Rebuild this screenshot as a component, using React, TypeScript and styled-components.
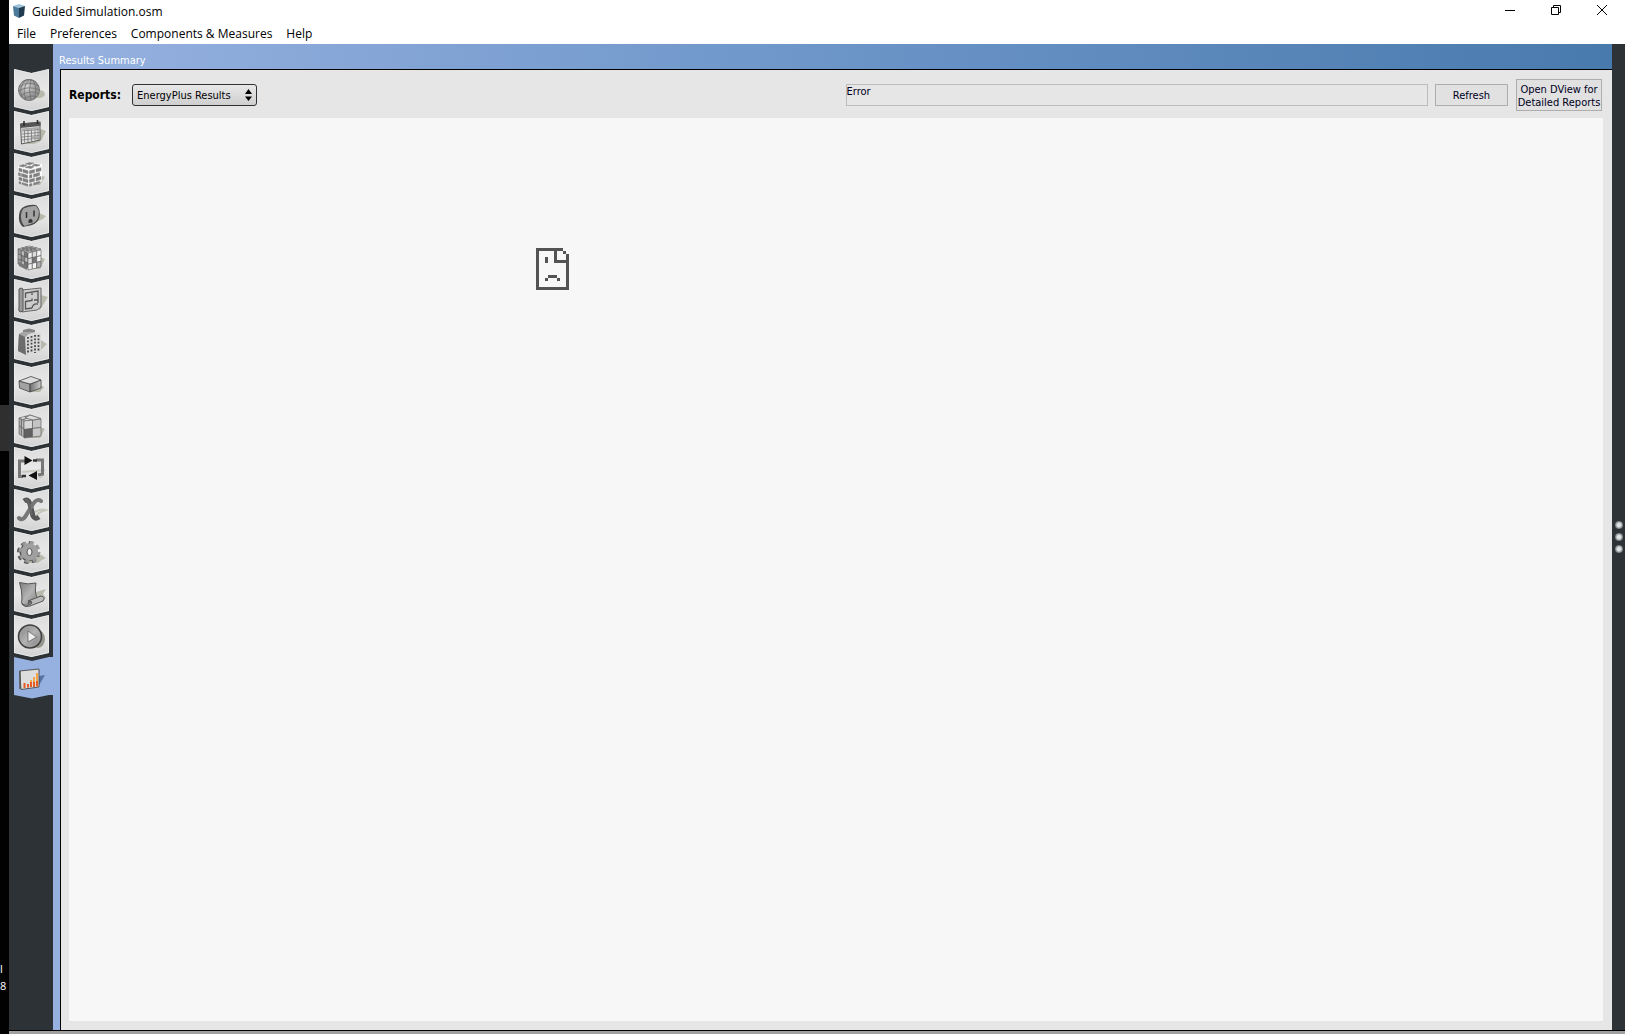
import React from "react";
import styled, { createGlobalStyle } from "styled-components";

const ui = '"DejaVu Sans Condensed", "DejaVu Sans", Tahoma, sans-serif';
const system = '"Open Sans", "Segoe UI", sans-serif';

const Global = createGlobalStyle`
  *, *::before, *::after { box-sizing: border-box; }
  body { margin: 0; background: #000; color: #000; }
  button, select { margin: 0; font: inherit; color: inherit; }
`;

const Desktop = styled.div`
  display: flex;
  height: 100vh;
  overflow: hidden;
  font: 11px/13px ${ui};
`;

const Taskbar = styled.aside`
  display: flex;
  flex: 0 0 9px;
  flex-direction: column;
  justify-content: space-between;
  padding: 405px 0 40px;
  background: #020202;
  color: #fff;
  font: 11px/17px ${system};
`;

const ActiveTask = styled.div`
  height: 46px;
  background: #2f2f2f;
`;

const Clock = styled.div`
  display: flex;
  flex-direction: column;
`;

const Window = styled.div`
  display: flex;
  flex: 1;
  flex-direction: column;
  min-width: 0;
  border-bottom: 3px solid #a0a0a0;
  background: #fff;
`;

const TitleBar = styled.header`
  display: flex;
  align-items: center;
  height: 22px;
  padding-left: 3px;
  gap: 6px;
  font: 12px/16px ${system};
`;

const Title = styled.h1`
  flex: 1;
  margin: 0;
  padding-top: 2px;
  font: inherit;
`;

const WindowButtons = styled.div`
  display: flex;
  align-self: stretch;
`;

const WindowButton = styled.button`
  display: grid;
  place-items: center;
  width: 46px;
  padding: 0 0 2px;
  border: 0;
  background: none;
`;

const MenuBar = styled.nav`
  display: flex;
  height: 22px;
  padding: 1px 0 0 1px;
  font: 12px/22px ${system};
`;

const MenuButton = styled.button`
  padding: 0 7px;
  border: 0;
  background: none;
  line-height: 22px;
`;

const Body = styled.div`
  display: flex;
  flex: 1;
  min-height: 0;
  border-bottom: 1px solid #000;
`;

const Sidebar = styled.nav`
  display: flex;
  flex: 0 0 44px;
  flex-direction: column;
  padding: 25px 0 0 5px;
  background: #2c3235;
`;

const Tab = styled.button`
  flex: 0 0 42px;
  width: 39px;
  padding: 0;
  border: 0;
  background: none;

  svg { display: block; }
`;

const Content = styled.main`
  display: flex;
  flex: 1;
  flex-direction: column;
  min-width: 0;
  padding-left: 7px;
  background: linear-gradient(90deg, #96b1e0, #6c95c8 50%, #497aae);
`;

const Heading = styled.h2`
  height: 25px;
  margin: 0;
  padding-top: 10px;
  color: #fff;
  font: 11px/13px ${ui};
  text-indent: -1px;
`;

const Panel = styled.section`
  display: flex;
  flex: 1;
  flex-direction: column;
  min-height: 0;
  padding: 0 9px 9px 8px;
  border: solid #000;
  border-width: 1px 0 0 1px;
  background: #e6e6e6;
`;

const Toolbar = styled.div`
  display: grid;
  grid-template-columns: 4fr 3fr auto;
  align-items: center;
  height: 48px;
  padding: 2px 1px 0 0;
`;

const ReportPicker = styled.div`
  display: flex;
  align-items: center;
  gap: 11px;
`;

const ReportLabel = styled.label`
  font: bold 12px/16px ${ui};
`;

const SelectBox = styled.div`
  position: relative;
  width: 125px;
  height: 22px;

  svg {
    position: absolute;
    top: 5px;
    right: 5px;
    pointer-events: none;
  }
`;

const Select = styled.select`
  width: 100%;
  height: 100%;
  padding: 1px 16px 0 4px;
  border: 1px solid #2c3235;
  border-radius: 3px;
  appearance: none;
  background: linear-gradient(#e8e8e8, #cfcfcf);
`;

const Status = styled.output`
  height: 22px;
  border: 1px solid #bcbcbc;
  color: #00001c;
`;

const Actions = styled.div`
  display: flex;
  align-items: center;
  gap: 8px;
  padding-left: 7px;
`;

const ActionButton = styled.button<{ $tall?: boolean }>`
  width: ${(p) => (p.$tall ? 86 : 73)}px;
  height: ${(p) => (p.$tall ? 32 : 22)}px;
  padding: 1px 0 0;
  border: 1px solid #adadad;
  background: #e1e1e1;
  color: #00001c;
  line-height: 13px;
  white-space: nowrap;
`;

const ReportView = styled.div`
  flex: 1;
  background: #f7f7f7;
`;

const ErrorPage = styled.div`
  max-width: 600px;
  margin: 0 auto;
  padding-top: 130px;
`;

const Splitter = styled.aside`
  display: flex;
  flex: 0 0 13px;
  flex-direction: column;
  align-items: center;
  justify-content: center;
  gap: 4px;
  background: #2c3235;
`;

const Grip = styled.span`
  width: 8px;
  height: 8px;
  border-radius: 50%;
  background: radial-gradient(circle, #dfe2e3 30%, #6d7274 70%);
`;

/* A face of a drawn box, divided into n by n cells along two edge vectors. */
function Face({ x, y, u, v, n, fills }: { x: number; y: number; u: number[]; v: number[]; n: number; fills: string[] }) {
  const cells: React.ReactNode[] = [];
  for (let r = 0; r < n; r++) {
    for (let c = 0; c < n; c++) {
      const at = (a: number, b: number) =>
        `${x + (u[0] * a + v[0] * b) / n},${y + (u[1] * a + v[1] * b) / n}`;
      cells.push(
        <polygon
          key={r * n + c}
          points={`${at(c, r)} ${at(c + 1, r)} ${at(c + 1, r + 1)} ${at(c, r + 1)}`}
          fill={fills[(r * n + c) % fills.length]}
          stroke="#555"
          strokeWidth=".6"
        />
      );
    }
  }
  return <>{cells}</>;
}

const shadow = "#b9baad";

const Globe = () => (
  <g>
    <ellipse cx="25" cy="25" rx="6" ry="4" fill={shadow} />
    <circle cx="15" cy="21" r="10.5" fill="url(#ball)" stroke="#777" />
    <g fill="none" stroke="#707070" strokeWidth=".8">
      <path d="M5 18Q14 11 25 17M4.500 22Q14 16 25.500 21M6 27Q16 20 25 25M8 13Q14 8 22 13M10 30Q17 25 23 28" />
      <path d="M15 10.500Q7 20 12 31M17 10.500Q14 20 17 31.500M19 11Q24 20 20 30M12 11Q4 18 8 28" />
    </g>
  </g>
);

const Calendar = () => (
  <g>
    <path d="M27 18L32 20L27 30L20 33H12Z" fill={shadow} />
    <path d="M6.500 13L26 11.500V29L7.500 33Z" fill="#e2e2e2" stroke="#595959" />
    <path d="M6.500 12.500L26.500 10.500V15L6.500 17Z" fill="#555" />
    <path d="M10 10v5M23.500 9v4" stroke="#292929" strokeWidth="1.500" />
    <path d="M8 20L25 18.500M8 23L25 21.500M8 26L25 24.500M8 29L25 27M10.500 18.500V31.500M14 18V31M17.500 18V30M21 17.500V29M24 17.500V29" stroke="#777" strokeWidth=".8" />
    <path d="M8 18.500L25 17M18 27L24 26" stroke="#aaa" strokeWidth="2" />
  </g>
);

const Bricks = () => (
  <g>
    <path d="M26 22L31 24L26 32H19Z" fill={shadow} />
    <path d="M4 13L15 9L28 11V28L15 33.500L5 30Z" fill="#fafafa" />
    <g fill="#808080" stroke="#808080" strokeWidth=".5">
      <path d="M5 13l4-1.500 4 1-4 1.500zM11 11l4-1.500 5 .5-4 1.800zM21 11l5 1-3 1.300-5-.8zM11 14.500l4-1.500 5 .7-3 1.800z" />
      <path d="M5 15l3 1v3l-3-1zM9 16.300l5 1.400v3l-5-1.400zM4.500 19.500l2 .7v3l-2-.7zM7.500 20.500l6 1.700v3l-6-1.700zM5 24l3 1v3l-3-1zM9 25.300l5 1.400v3l-5-1.400zM5 28.500l2 .6v2l-2-.6zM8 29.500l6 1.800v2l-6-2z" />
      <path d="M15.500 17.800l5-1.300v3l-5 1.300zM22 16l5-1.300v3L22 19zM15.500 22.200l2.500-.6v3l-2.500.6zM19.500 21.200l6-1.600v3l-6 1.600zM15.500 26.600l5-1.300v3l-5 1.300zM22 24.900l5-1.300v3l-5 1.300zM15.500 31l2.500-.6v2.200l-2.500.8zM19.500 29.900l6-1.600v1.700l-6 2.200z" />
    </g>
  </g>
);

const Outlet = () => (
  <g>
    <path d="M25 18L32 21Q29 25 24 26L14 32Z" fill={shadow} />
    <path d="M8 13Q14 9 22 10Q27 14 25.500 22Q24 28 18 30L9 32Q4 28 5 20Q5 16 8 13Z" fill="#4a4a4a" />
    <path d="M9.500 13.500Q15 10.500 22 11Q26 15 24.500 21Q23 27 18 28.500L10.500 31Q6.500 27 7 20Q7 16 9.500 13.500Z" fill="#a3a3a3" />
    <path d="M12.500 17v6M20 15.500v6" stroke="#333" strokeWidth="1.500" />
    <path d="M14.500 28v-2.500q2-3.500 4 0v2z" fill="#333" />
  </g>
);

const Rubik = () => (
  <g>
    <path d="M26 20L31 22L26 32H16Z" fill={shadow} />
    <Face x={4} y={12} u={[10, 4]} v={[0, 15]} n={3} fills={["#999", "#bbb", "#777", "#aaa", "#888", "#bbb"]} />
    <Face x={4} y={12} u={[11, -3]} v={[12, 3]} n={3} fills={["#d3d3d3", "#bcbcbc"]} />
    <Face x={14} y={16} u={[13, -3]} v={[0, 17]} n={3} fills={["#eee", "#ddd", "#f5f5f5", "#ddd", "#777", "#f3f3f3", "#eee", "#f3f3f3", "#aaa"]} />
    <path d="M5 25l8 4v4l-8-4z" fill="#777" />
  </g>
);

const FloorPlan = () => (
  <g>
    <path d="M27 16L34 18L26 31L21 29Z" fill={shadow} />
    <path d="M8 11L27 9V28L23 31L8 33Z" fill="#ccc" stroke="#666" />
    <path d="M5 10Q7 8 9 10V32L6 33Q4 31 5 29Z" fill="#999" stroke="#555" />
    <path d="M11.500 19V14L24 12V24M11.500 22V30L18 29M18 13V16M18 19.500V21.500L11.500 22.500M20 21H24M18 29Q19 24 24 25" fill="none" stroke="#555" strokeWidth="1.300" />
  </g>
);

const Building = () => (
  <g>
    <path d="M27 19L33 23L27 29Z" fill={shadow} />
    <path d="M5 13L9 11V9L15 7.500L21 9V12L14 18V34L4 30Z" fill="#858585" />
    <path d="M5 13L12 15V34L4 30Z" fill="#6c6c6c" />
    <path d="M11 16L14 13L20 11L27 13V31L12 34Z" fill="#d8d8d8" />
    <path d="M14 16V33M17.500 15V32M21 14V32M24.500 14V31" stroke="#444" strokeWidth="1.800" strokeDasharray="1.800 1.600" />
    <path d="M5 13L9 11L21 11L14 13L11 16Z" fill="#a6a6a6" />
  </g>
);

const Box = () => (
  <g>
    <path d="M26 22L30 24L26 29H17Z" fill={shadow} />
    <path d="M5 18L16 21V29L5.500 25Z" fill="#a2a2a2" stroke="#444" strokeWidth=".8" />
    <path d="M16 21L27 17V25L16 29Z" fill="url(#side)" stroke="#444" strokeWidth=".8" />
    <path d="M5 18L17 13.500L27 17L16 21Z" fill="#dedede" stroke="#444" strokeWidth=".8" />
  </g>
);

const Blocks = () => (
  <g>
    <path d="M26 22L31 24L26 33H17Z" fill={shadow} />
    <Face x={5} y={13} u={[5, 3]} v={[0, 16]} n={2} fills={["#aaa", "#bbb"]} />
    <Face x={5} y={13} u={[11, -3]} v={[8, 3]} n={2} fills={["#e1e1e1", "#cfcfcf"]} />
    <Face x={10} y={16} u={[17, -2]} v={[0, 17]} n={2} fills={["#d7d7d7", "#c4c4c4", "#606060", "#c8c8c8"]} />
    <path d="M16 10L27 13.500L19 15L11 13Z" fill="#ddd" stroke="#666" strokeWidth=".8" />
  </g>
);

const Loop = () => (
  <g>
    <path d="M8 25L31 23M25 31l5-3" stroke="#c9c9c0" strokeWidth="2" />
    <g fill="none" stroke="#777" strokeWidth="3">
      <path d="M12 14H5.500V29.500H9M22 13H28.500V27L24 28" />
    </g>
    <path d="M19 13.500H23M8 29H12" stroke="#333" strokeWidth="2.500" />
    <path d="M10.500 9L18.500 13.500L10.500 18ZM23 24L14.500 28.500L23 33Z" fill="#111" />
  </g>
);

const Variable = () => (
  <g>
    <path d="M17 25Q27 19 32 21Q25 23 23 26" fill="none" stroke="#c5c5bc" strokeWidth="2" />
    <path d="M10 12Q14 9 16 15L19 27Q21 31 25 28" fill="none" stroke="#555" strokeWidth="5" />
    <path d="M27 12Q23 9 19 15L11 28Q8 32 5 29" fill="none" stroke="#777" strokeWidth="4" strokeLinecap="round" />
    <path d="M11 11Q14 10 15 15L18 26" fill="none" stroke="#666" strokeWidth="2" />
  </g>
);

const Gear = () => (
  <g>
    <path d="M22 24l6 0 2 2 2 1-4 2-4 3-12 0z" fill={shadow} />
    <circle cx="14.500" cy="21.500" r="9.500" fill="none" stroke="#555" strokeWidth="4" strokeDasharray="4 3.460" />
    <circle cx="14.500" cy="21.500" r="9" fill="#555" />
    <circle cx="15.500" cy="21" r="9.500" fill="none" stroke="#999" strokeWidth="3" strokeDasharray="4 3.460" />
    <circle cx="15.500" cy="21" r="8.500" fill="#a0a0a0" />
    <ellipse cx="15.500" cy="21" rx="2.500" ry="3.500" fill="#eee" stroke="#555" />
  </g>
);

const Scroll = () => (
  <g>
    <path d="M22 19L32 16L29 21L32 25L24 27Z" fill={shadow} />
    <path d="M5.500 9.500Q14 12 22 10Q20 20 24 26L13 33Q6 34 8 25Q8 17 5.500 9.500Z" fill="url(#metal)" stroke="#555" />
    <path d="M14 28L27 23Q32 24 29 28L16 33Q11 35 8 31Q14 34 18 30Q18 27 14 28Z" fill="#bbb" stroke="#555" />
    <path d="M17 29q-3-1-3 2" fill="none" stroke="#444" />
  </g>
);

const Play = () => (
  <g>
    <ellipse cx="24" cy="24" rx="7" ry="9" fill="#96968f" />
    <circle cx="16" cy="21.500" r="11.500" fill="url(#metal)" stroke="#404040" strokeWidth="1.500" />
    <circle cx="16" cy="21.500" r="9.500" fill="none" stroke="#aaa" strokeWidth=".7" />
    <path d="M14 16L22.500 22L14 27Z" fill="#eee" stroke="#555" strokeWidth=".7" />
  </g>
);

const Chart = () => (
  <g>
    <path d="M25 19L31 18L24 30H16Z" fill="#5871a0" />
    <path d="M5.500 14L25 12V30L7 32.500Z" fill="#ddd" stroke="#555" />
    <path d="M6 14V32" stroke="#555" strokeWidth="1.500" />
    <path d="M10.500 31V26M14 30.500V27M17 30V23M20 30V20M23 29.500V16" stroke="#e65a24" strokeWidth="2" />
    <path d="M17 25V23M20 25V20M23 24V16" stroke="#f3a548" strokeWidth="2" />
  </g>
);

const tabs: { name: string; Icon: () => React.ReactElement }[] = [
  { name: "Site", Icon: Globe },
  { name: "Schedules", Icon: Calendar },
  { name: "Constructions", Icon: Bricks },
  { name: "Loads", Icon: Outlet },
  { name: "Space Types", Icon: Rubik },
  { name: "Geometry", Icon: FloorPlan },
  { name: "Facility", Icon: Building },
  { name: "Spaces", Icon: Box },
  { name: "Thermal Zones", Icon: Blocks },
  { name: "HVAC Systems", Icon: Loop },
  { name: "Output Variables", Icon: Variable },
  { name: "Simulation Settings", Icon: Gear },
  { name: "Measures", Icon: Scroll },
  { name: "Run Simulation", Icon: Play },
  { name: "Results Summary", Icon: Chart },
];

const HiddenDefs = styled.svg`
  position: absolute;
  width: 0;
  height: 0;
`;

const Gradients = () => (
  <HiddenDefs aria-hidden="true">
    <defs>
      <linearGradient id="tab" x2="0" y2="1">
        <stop stopColor="#dcdcdc" />
        <stop offset=".5" stopColor="#e8e8e8" />
        <stop offset="1" stopColor="#d2d2d2" />
      </linearGradient>
      <radialGradient id="ball" cx=".4" cy=".35">
        <stop stopColor="#d4d4d4" />
        <stop offset="1" stopColor="#949494" />
      </radialGradient>
      <linearGradient id="metal" x2="1" y2="1">
        <stop stopColor="#7c7c7c" />
        <stop offset=".5" stopColor="#b4b4b4" />
        <stop offset="1" stopColor="#777" />
      </linearGradient>
      <linearGradient id="side">
        <stop stopColor="#707070" />
        <stop offset="1" stopColor="#ccc" />
      </linearGradient>
    </defs>
  </HiddenDefs>
);

export default function App() {
  return (
    <Desktop>
      <Global />
      <Gradients />
      <Taskbar>
        <ActiveTask />
        <Clock>
          <span>l</span>
          <span>8</span>
        </Clock>
      </Taskbar>
      <Window>
        <TitleBar>
          <svg width="14" height="14" viewBox="0 0 14 14" aria-hidden="true">
            <path d="M1 2L7 0L13 2L7 4Z" fill="#9fc3da" />
            <path d="M1 2L7 4V14L2 11.500Z" fill="#4a7999" />
            <path d="M7 4L13 2L12 11.500L7 14Z" fill="#203a50" />
          </svg>
          <Title>Guided Simulation.osm</Title>
          <WindowButtons>
            <WindowButton aria-label="Minimize">
              <svg width="10" height="10"><path d="M0 5.500h10" stroke="#000" /></svg>
            </WindowButton>
            <WindowButton aria-label="Restore">
              <svg width="10" height="10" fill="none" stroke="#000">
                <path d="M.5 2.500h7v7h-7zM2.500 2.500v-2h7v7h-2" />
              </svg>
            </WindowButton>
            <WindowButton aria-label="Close">
              <svg width="10" height="10"><path d="M0 0l10 10M10 0L0 10" stroke="#000" /></svg>
            </WindowButton>
          </WindowButtons>
        </TitleBar>
        <MenuBar>
          <MenuButton>File</MenuButton>
          <MenuButton>Preferences</MenuButton>
          <MenuButton>Components &amp; Measures</MenuButton>
          <MenuButton>Help</MenuButton>
        </MenuBar>
        <Body>
          <Sidebar>
            {tabs.map(({ name, Icon }, i) => {
              const active = i === tabs.length - 1;
              return (
                <Tab key={name} aria-label={name} aria-current={active ? "page" : undefined}>
                  <svg width="39" height="42" viewBox="0 0 39 42">
                    {active ? (
                      <path d="M0 0L18 4L35 0H39V38H35L18 41.500L0 38Z" fill="#96b1e0" />
                    ) : (
                      <>
                        <path d="M0 0L17.500 4L35 0V38L17.500 42L0 38Z" fill="url(#tab)" />
                        <path d="M.5 .5L17.500 4.500L34.500 .5V37.500L17.500 41.500L.5 37.500Z" fill="none" stroke="#f0f0f0" strokeOpacity=".7" />
                      </>
                    )}
                    <Icon />
                  </svg>
                </Tab>
              );
            })}
          </Sidebar>
          <Content>
            <Heading>Results Summary</Heading>
            <Panel>
              <Toolbar>
                <ReportPicker>
                  <ReportLabel htmlFor="report">Reports:</ReportLabel>
                  <SelectBox>
                    <Select id="report">
                      <option>EnergyPlus Results</option>
                    </Select>
                    <svg width="7" height="12" aria-hidden="true">
                      <path d="M3.500 0L7 5H0ZM0 7.500H7L3.500 12Z" />
                    </svg>
                  </SelectBox>
                </ReportPicker>
                <Status>Error</Status>
                <Actions>
                  <ActionButton>Refresh</ActionButton>
                  <ActionButton $tall>
                    Open DView for
                    <br />
                    Detailed Reports
                  </ActionButton>
                </Actions>
              </Toolbar>
              <ReportView>
                <ErrorPage>
                  <svg width="33" height="42" viewBox="0 0 11 14" shapeRendering="crispEdges" role="img" aria-label="Page failed to load">
                    <path
                      fill="#535353"
                      d="M0 0H9V1H7V4H10V2H11V14H0ZM1 1V13H10V5H6V1ZM9 1H10V2H9ZM3 3H4V5H3ZM4 9H7V10H4ZM3 10H4V11H3ZM7 10H8V11H7Z"
                      fillRule="evenodd"
                    />
                  </svg>
                </ErrorPage>
              </ReportView>
            </Panel>
          </Content>
          <Splitter>
            <Grip />
            <Grip />
            <Grip />
          </Splitter>
        </Body>
      </Window>
    </Desktop>
  );
}
